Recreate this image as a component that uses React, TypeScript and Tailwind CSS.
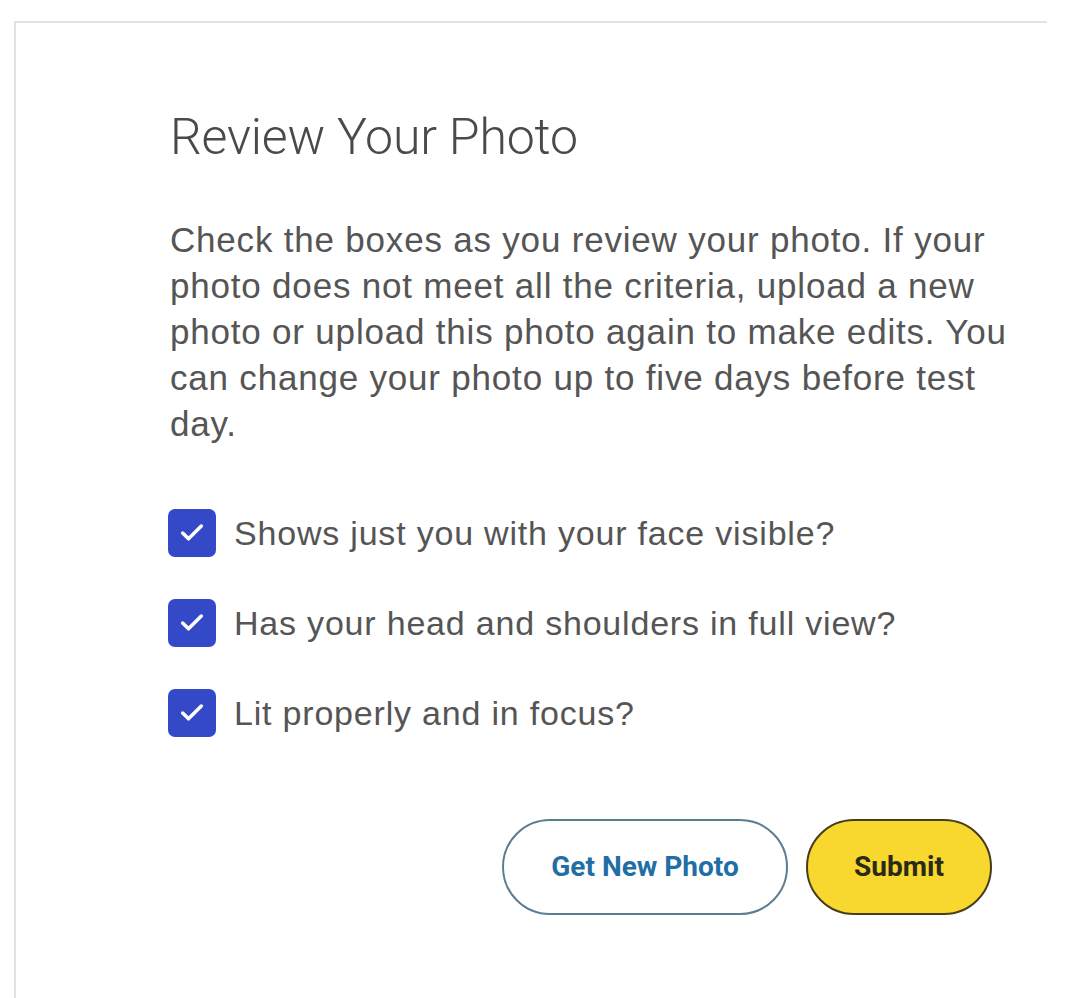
import { Check } from 'lucide-react'

const items = [
  'Shows just you with your face visible?',
  'Has your head and shoulders in full view?',
  'Lit properly and in focus?',
]

export default function App() {
  return (
    <div className="min-h-screen bg-white pt-[21px] font-['Roboto',sans-serif]">
      <div className="ml-[14px] mr-[33px] min-h-[977px] border-t-2 border-l-2 border-[#e2e2e2] pl-[154px] pr-[20px] pt-[82px]">
        <h1 className="text-[50px] font-light leading-[64px] tracking-[-0.2px] text-[#4a4a4a]">Review Your Photo</h1>

        <p className="mt-[48px] whitespace-nowrap font-['Liberation_Sans',sans-serif] text-[35px] leading-[46px] tracking-[0.8px] text-[#555]">
          Check the boxes as you review your photo. If your
          <br />
          photo does not meet all the criteria, upload a new
          <br />
          photo or upload this photo again to make edits. You
          <br />
          can change your photo up to five days before test
          <br />
          day.
        </p>

        <div className="-ml-[2px] mt-[62px] flex flex-col gap-[42px]">
          {items.map((t) => (
            <label key={t} className="flex items-center gap-[18px]">
              <span className="flex h-[48px] w-[48px] shrink-0 items-center justify-center rounded-[7px] bg-[#3449c8]">
                <Check className="h-[28px] w-[28px] text-white" strokeWidth={3} />
              </span>
              <span className="font-['Liberation_Sans',sans-serif] text-[34px] leading-[48px] tracking-[0.8px] text-[#555]">{t}</span>
            </label>
          ))}
        </div>

        <div className="mt-[82px] flex justify-end gap-[18px] pr-[35px]">
          <button className="h-[96px] w-[286px] rounded-full border-2 border-[#5b7d93] bg-white text-[28px] font-bold text-[#1f6fa6]">
            Get New Photo
          </button>
          <button className="h-[96px] w-[186px] rounded-full border-2 border-[#463d1c] bg-[#f8d72e] text-[28px] font-bold text-[#2a2a1a]">
            Submit
          </button>
        </div>
      </div>
    </div>
  )
}
